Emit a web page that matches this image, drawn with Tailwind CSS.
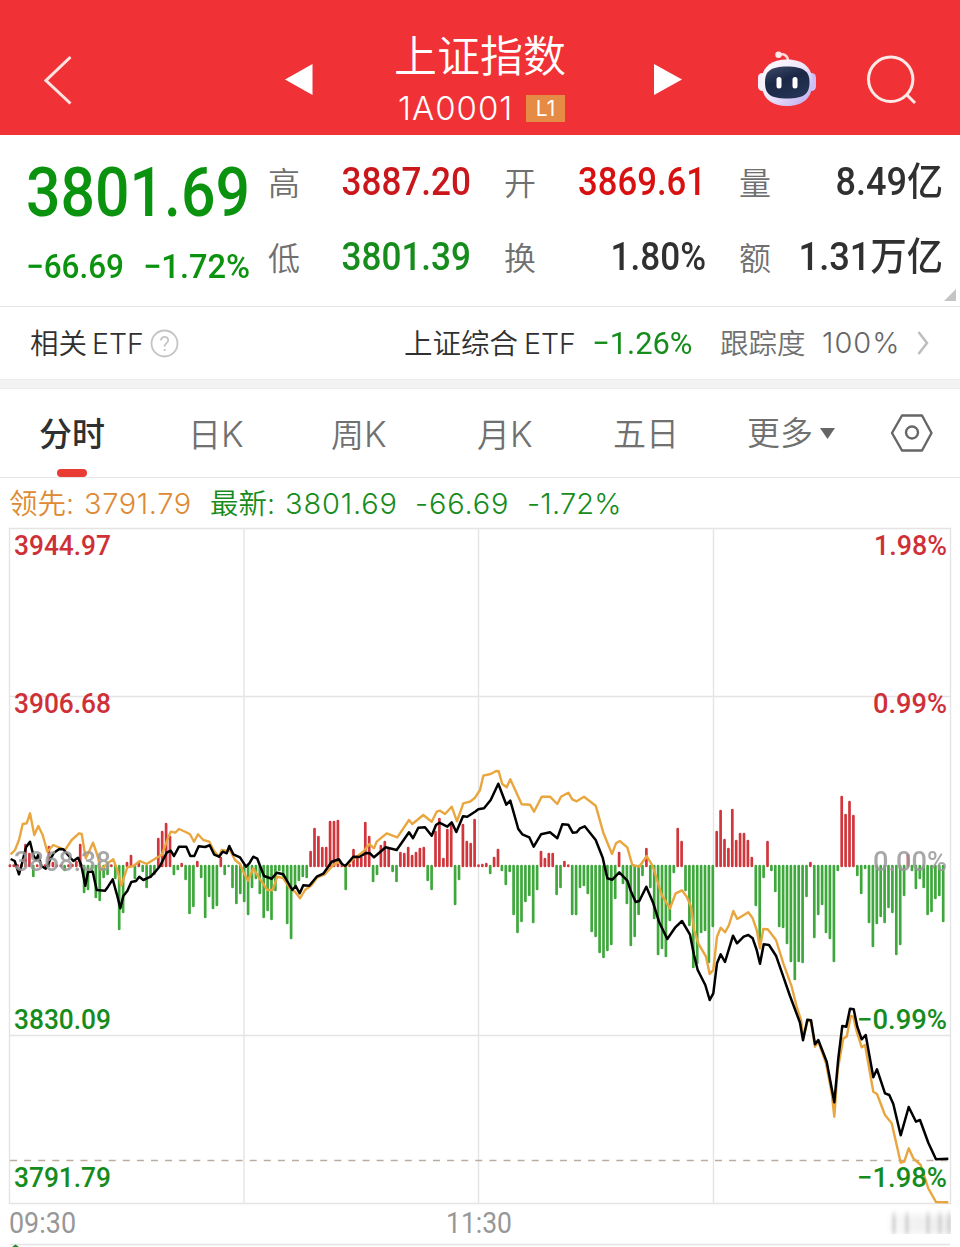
<!DOCTYPE html>
<html lang="zh-CN">
<head>
<meta charset="utf-8">
<title>上证指数</title>
<script src="https://cdn.jsdelivr.net/npm/@tailwindcss/browser@4"></script>
</head>
<body class="w-[960px] h-[1247px] overflow-hidden bg-white font-['Inter','Noto_Sans_CJK_SC',sans-serif] text-[#303030]">
<header class="flex h-[135px] bg-[#f03237] text-white">
  <div class="w-[285px] pl-[44px] pt-[54px]">
    <svg class="block" width="29" height="52" viewBox="0 0 29 52" fill="none" stroke="#ffe4e2" stroke-width="3"><path d="M26.500 3 2 26.500 26.500 49.500"/></svg>
  </div>
  <svg class="mt-[64px]" width="28" height="32" viewBox="0 0 28 32" fill="#fff"><path d="M0 15.500 27.500 0V31Z"/></svg>
  <div class="flex w-[341px] flex-col pt-[29px] pl-[81px]">
    <h1 class="h-[53px] text-[43px] leading-[54px] font-[350] whitespace-nowrap">上证指数</h1>
    <div class="flex h-[53px] w-[171px] items-center justify-between pl-[4px]">
      <span class="text-[33px] leading-[53px] font-light tracking-[1px]">1A0001</span>
      <span class="flex h-[27px] w-[39px] items-center justify-center bg-[#e58b45] text-[21px]">L1</span>
    </div>
  </div>
  <svg class="mt-[64px]" width="28" height="32" viewBox="0 0 28 32" fill="#fff"><path d="M28 15.500 0 0V31Z"/></svg>
  <svg class="mt-[50px] ml-[75px]" width="60" height="58" viewBox="757 50 60 58">
    <defs>
      <linearGradient id="shell" x1="0" y1="0" x2="1" y2="1"><stop offset="0" stop-color="#fff"/><stop offset=".5" stop-color="#eee6fa"/><stop offset="1" stop-color="#b9a4ef"/></linearGradient>
      <linearGradient id="visor" x1="0" y1="0" x2=".5" y2="1"><stop offset="0" stop-color="#3e4b69"/><stop offset=".5" stop-color="#1b2845"/><stop offset="1" stop-color="#243354"/></linearGradient>
    </defs>
    <path d="M779 55C784 53 788 56 788 61" fill="none" stroke="#ffd9dc" stroke-width="2.500"/>
    <circle cx="778.500" cy="54.800" r="3.200" fill="#ffe9ea"/>
    <rect x="758" y="73" width="9" height="18" rx="4.500" fill="#f5eefb"/>
    <rect x="807" y="73" width="9" height="18" rx="4.500" fill="#cdbef5"/>
    <path d="M787 59.500C805 59.500 812.500 69 812.500 82 812.500 97 804 106 787 106 770 106 761.500 97 761.500 82 761.500 69 769 59.500 787 59.500Z" fill="url(#shell)"/>
    <path d="M787 66.500C803 66.500 809.500 71 809.500 82 809.500 94 804 98.500 787 98.500 770 98.500 765 94 765 82 765 71 771 66.500 787 66.500Z" fill="url(#visor)"/>
    <rect x="776.500" y="77" width="5" height="11.500" rx="2.500" fill="#fff"/>
    <rect x="792.500" y="77" width="5" height="11.500" rx="2.500" fill="#fff"/>
  </svg>
  <svg class="mt-[54px] ml-[49px]" width="52" height="52" viewBox="866 54 52 52" fill="none" stroke="#ffe9e7" stroke-width="3"><circle cx="890.700" cy="79.300" r="22.200"/><path d="M906.500 94.500 915 103"/></svg>
</header>

<section class="relative flex h-[172px] border-b border-[#e6e6e6] font-['Roboto','Noto_Sans_CJK_SC',sans-serif] font-medium">
  <div class="w-[268px] pl-[26px] text-[#0b930f]">
    <div class="mt-[18px] h-[80px] origin-left scale-x-[.88] text-[69px] leading-[80px] whitespace-nowrap">3801.69</div>
    <div class="mt-[11px] flex h-[44px] w-[225px] justify-between text-[34px] leading-[44px] whitespace-nowrap">
      <span class="w-[98px] origin-left scale-x-[.925]">−66.69</span><span class="w-[108px] origin-left scale-x-[.96]">−1.72%</span>
    </div>
  </div>
  <dl class="grid h-[150px] grid-cols-[33px_170px_33px_33px_169px_33px_33px_171px] grid-rows-[75px_75px] pt-[10px] text-[39px] leading-[75px] whitespace-nowrap">
    <dt class="pt-[2px] text-[32px] font-[350] text-[#707070]">高</dt>
    <dd class="origin-right scale-x-[.9] text-right text-[#c9171b]">3887.20</dd>
    <dt class="col-start-4 pt-[2px] text-[32px] font-[350] text-[#707070]">开</dt>
    <dd class="origin-right scale-x-[.89] text-right text-[#d8100f]">3869.61</dd>
    <dt class="col-start-7 pt-[2px] text-[32px] font-[350] text-[#707070]">量</dt>
    <dd class="origin-right scale-x-[.925] text-right">8.49亿</dd>
    <dt class="pt-[2px] text-[32px] font-[350] text-[#707070]">低</dt>
    <dd class="origin-right scale-x-[.9] text-right text-[#168c1c]">3801.39</dd>
    <dt class="col-start-4 pt-[2px] text-[32px] font-[350] text-[#707070]">换</dt>
    <dd class="origin-right scale-x-[.9] text-right">1.80%</dd>
    <dt class="col-start-7 pt-[2px] text-[32px] font-[350] text-[#707070]">额</dt>
    <dd class="origin-right scale-x-[.93] text-right">1.31万亿</dd>
  </dl>
  <svg class="absolute top-[154px] left-[944px]" width="12" height="12" viewBox="0 0 12 12" fill="#c4c4c4"><path d="M12 0V12H0Z"/></svg>
</section>

<section class="flex h-[72px] items-center pl-[30px] text-[28.500px] whitespace-nowrap">
  <span class="w-[120px] pt-[2px] font-[350] [word-spacing:-3px]">相关 ETF</span>
  <svg width="29" height="29" viewBox="0 0 29 29" fill="none" stroke="#c4c4c4" stroke-width="1.800"><circle cx="14.500" cy="14.500" r="13"/><path d="M11 11.500C11 6.500 18.300 6.800 18.200 11.300 18.200 14 14.600 14.200 14.600 17.500M14.600 20V22"/></svg>
  <span class="ml-[225px] w-[188px] pt-[2px] font-[350] [word-spacing:-2px]">上证综合 ETF</span>
  <span class="w-[128px] origin-left scale-x-[.965] font-['Roboto',sans-serif] text-[32px] text-[#168c1c]">−1.26%</span>
  <span class="w-[102px] pt-[2px] font-[350] text-[#707070]">跟踪度</span>
  <span class="w-[95px] text-[29px] font-light tracking-[1px] text-[#666]">100%</span>
  <svg width="12" height="26" viewBox="0 0 12 26" fill="none" stroke="#bdbdbd" stroke-width="2.500"><path d="M1.500 2 10 13 1.500 24"/></svg>
</section>
<div class="h-[10px] border-y border-[#ececec] bg-[#f3f3f3]"></div>

<nav class="flex h-[89px] border-b border-[#e6e6e6] text-[33px] leading-[90px] font-[350] whitespace-nowrap text-[#707070]">
  <div class="relative w-[188px] pl-[39px] font-medium text-[#303030]">分时<i class="absolute bottom-0 left-[57px] h-[8px] w-[30px] rounded-full bg-[#e93c34]"></i></div>
  <div class="w-[143px]">日<span class="text-[35px]">K</span></div>
  <div class="w-[146px]">周<span class="text-[35px]">K</span></div>
  <div class="w-[136px]">月<span class="text-[35px]">K</span></div>
  <div class="w-[134px]">五日</div>
  <div class="flex w-[143px] items-center gap-[7px]">更多<svg width="15" height="11" viewBox="0 0 15 11" fill="#666"><path d="M0 0H15L7.500 11Z"/></svg></div>
  <svg class="mt-[24px]" width="44" height="40" viewBox="0 0 44 40" fill="none" stroke="#666" stroke-width="2.400" stroke-linejoin="round"><path d="M12 2.500H32L41.500 20 32 37.500H12L2 20Z"/><circle cx="22" cy="19.500" r="6"/></svg>
</nav>

<div class="flex h-[49px] items-center pt-[3px] pl-[9px] text-[28.500px] font-[350] whitespace-nowrap text-[#168c1c]">
  <span class="w-[201px] text-[#dd8a32]">领先: <span class="ml-[2px] text-[29px] tracking-[0.600px]">3791.79</span></span>
  <span class="w-[205px]">最新: <span class="ml-[2px] text-[29px] tracking-[0.800px]">3801.69</span></span>
  <span class="w-[112px] text-[29px] tracking-[0.800px]">-66.69</span>
  <span class="text-[29px] tracking-[0.200px]">-1.72%</span>
</div>

<svg class="block" width="960" height="720" viewBox="0 527 960 720" fill="none">
  <g stroke="#e4e4e4" stroke-width="1.400">
    <path d="M9.500 528.500H950.500V1203.500H9.500Z" />
    <path d="M244 528V1203M478.500 528V1203M713.500 528V1203M10 696.500H950M10 1035.500H950M10 1244.500H950"/>
  </g>
  <path d="M10 1160.500H950" stroke="#b8ada0" stroke-width="1.300" stroke-dasharray="7 7.100"/>
  <g id="bars" stroke-width="2.700" stroke-linecap="round"></g>
  <polyline stroke="#e9a63f" stroke-width="2.400" stroke-linejoin="round" points="10.7,854.3 15,850 19,840 22.7,824 26.7,823.3 30,813.3 34.3,835 38.3,826 42.7,835 47.3,851.7 53.3,845 65,850 71.7,840 79,833.3 81.7,834 85.7,858.3 88.3,853.3 93,842.7 97.3,855 101,870 106.7,864 113.3,859.3 117.3,870 121.3,885.7 127.3,867.3 133.3,866 140,861 146.7,864 156.7,857.7 161.7,855 168.3,837.3 170.7,831.7 175.3,832.7 179,829 185.7,832 190,834.3 194,841.7 198,834.3 203.3,840 209.3,841.7 214,850.7 219,856.7 221.7,850 226.7,850.7 230,850 235,860 240,864 243.3,871.7 248,880.7 253.3,868.3 258.3,876.7 267.3,890 272.7,890 277.3,876.7 283.3,878.3 290,888.3 295,891.7 300,898.3 305,890 311.7,885 317.3,877.3 325,874.3 333.3,865 339,861.7 345.3,866.7 353.3,859 363.3,851.7 369.3,844 374,848.3 376.7,841.7 386.7,833.3 397.3,837.3 409,820 412.3,824 423.3,815 431.7,821.7 436.7,811.7 440,810.7 445,814 451.7,806.7 457,821.3 463.3,803.3 470,801.7 475,797.7 480,790 483.3,775.7 490.7,774 496,771 498.7,771.3 502.3,784 506.7,787.3 510.3,779.3 521.7,804.3 530,804.7 534,811.7 541.7,796.7 550,796.7 557.3,804 561,796.7 568.3,792.7 572.3,799.3 576.7,801.3 584,796.7 595.7,805.7 603.3,832.7 612,854 616,843.3 619.7,841 627.3,847.3 632.3,865 639.3,866.7 646.7,856 652.7,866 661.7,895 670,908.3 675.7,893.3 682,890.3 686.7,896.7 691,906.7 694,930 698.3,943.3 706,956.7 709.7,974 713.3,970 717,936.7 720.7,927.7 725,932.3 729,925 733.3,911 737.3,919 748.3,912.3 752.7,918.3 756.7,930 760,948.3 763.3,929 767.7,929.3 776,940 783.3,963.3 791.7,986.7 796.7,1006.7 801,1020 803.3,1038 807.7,1020.7 811,1021.7 815,1046.7 818.3,1041.7 826,1063.3 831.7,1093.3 834.3,1116.7 837.7,1070 843.3,1038.3 846.7,1036.7 850.7,1016 853.3,1016.7 856.7,1031.7 861.7,1047.3 865,1045 873.3,1091.7 877,1094 885,1115 891.7,1123.3 900.7,1162.7 904.3,1161.7 908.7,1148.3 913.3,1158.3 920.7,1165 928.3,1188.3 936,1202 948.3,1202.3"/>
  <polyline stroke="#000" stroke-width="2.500" stroke-linejoin="round" points="10.7,859 14.7,861 19,874.3 22,863.3 26,847.3 30,841.7 33.3,855 36,860 38.3,854.7 41.3,866 45.7,868.7 50,860 54,852.7 59.3,849 63.3,849.3 68,855 73.3,861 78,857.7 81.3,865 85.3,885.7 88,871.7 92.7,871.7 96.7,890 105,890.7 108,886.7 112.7,879.3 117.3,896 120.3,908.3 123.3,896 127.3,891 131.3,882 136,881 139.3,876.7 143.3,880 150.7,876.7 155.3,871.7 160,866 166.7,852.7 170.7,850.7 174,856 179,846.7 186.3,846.7 190.3,856 194.3,856 198.7,846.3 205,847 209.7,845.3 214.3,854.7 219,856.7 222.7,851.7 226.7,853.3 229.3,846 233.3,854.3 240,857.3 246,866.7 249.3,863.3 253.3,856.7 257.3,858.7 264,876 271.7,878.7 276.7,872.7 283.3,874.3 292.3,890 295.7,886 299.7,893.3 303.3,885.3 309.3,885.7 316.7,876.7 323.3,873.7 331.7,861.7 339,859.3 342,864 345.3,866 353.3,856.7 359.3,857 366,853 370,853.3 374,857.3 385.7,847.3 396.7,850 409,832.3 413,838.3 418.3,827.7 425,827.3 431.7,835.7 436,825 439.3,822.7 447.3,826.7 451.7,822.3 456.3,832 463,816.3 467.3,816.7 475,811.7 478.3,809.3 484,808.3 490.7,800 498.3,783.7 506.3,804.7 510.3,800.7 518.3,829 522.3,834.3 529.3,837.3 533.7,846.7 541,834.3 550,832.3 557.3,838.3 562.3,824.3 568.3,824.7 572.7,832.7 576.7,832.3 580,828.3 584.7,826.3 595.7,840 602.7,857.7 607.3,878.3 612.3,879.7 619.3,872.3 627.3,880.7 630.7,890.7 635.7,902 639.3,901 646.3,886.7 653.3,903.3 659,921.7 667.3,939 675,927.7 682,921 690,934.7 694,955 697.7,970 705.3,985 709.7,1000 713.3,993.3 717,963.3 720.7,954.3 725,962 733,935.7 737,943.3 743.7,936.7 748.3,935 752.7,938.3 756.7,950 760,963.7 763.7,944.3 769,945 776,955.7 783.3,976.7 790,996 800,1022.7 803,1040.3 807.3,1019.7 811,1020.3 815,1044.3 818.3,1040 826.7,1061.7 834.3,1102.3 838.3,1058.3 842.3,1026 846.3,1026.7 850,1008.7 853.7,1009.3 857.3,1026.7 861.7,1039.3 865.7,1035 873.3,1077.3 877,1069.3 885,1093.3 889.3,1095 893.3,1104 900.7,1135.3 908.7,1107 916,1121.7 920,1120 928.3,1142.7 936,1159.3 948.3,1158.7"/>
  <g font-family="Roboto, sans-serif" font-weight="500" font-size="28">
    <g fill="#999" opacity=".85">
      <text x="14" y="870.500" textLength="97" lengthAdjust="spacingAndGlyphs">3868.38</text>
      <text x="873" y="870.500" textLength="74" lengthAdjust="spacingAndGlyphs">0.00%</text>
    </g>
    <g fill="#cf3037">
      <text x="14" y="555" textLength="97" lengthAdjust="spacingAndGlyphs">3944.97</text>
      <text x="874" y="555" textLength="73" lengthAdjust="spacingAndGlyphs">1.98%</text>
      <text x="14" y="713" textLength="97" lengthAdjust="spacingAndGlyphs">3906.68</text>
      <text x="873" y="713" textLength="74" lengthAdjust="spacingAndGlyphs">0.99%</text>
    </g>
    <g fill="#168c1c">
      <text x="14" y="1028.500" textLength="97" lengthAdjust="spacingAndGlyphs">3830.09</text>
      <text x="857" y="1028.500" textLength="90" lengthAdjust="spacingAndGlyphs">−0.99%</text>
      <text x="14" y="1186.500" textLength="97" lengthAdjust="spacingAndGlyphs">3791.79</text>
      <text x="857" y="1186.500" textLength="90" lengthAdjust="spacingAndGlyphs">−1.98%</text>
    </g>
    <g fill="#979797" font-weight="400" font-size="29">
      <text x="9" y="1233" textLength="67" lengthAdjust="spacingAndGlyphs">09:30</text>
      <text x="446" y="1233" textLength="66" lengthAdjust="spacingAndGlyphs">11:30</text>
    </g>
  </g>
  <defs>
    <linearGradient id="fade"><stop offset="0" stop-color="#ededed" stop-opacity="0"/><stop offset=".3" stop-color="#ededed" stop-opacity=".8"/><stop offset="1" stop-color="#e6e6e6"/></linearGradient>
    <filter id="soft" filterUnits="userSpaceOnUse" x="870" y="1200" width="90" height="47"><feGaussianBlur stdDeviation="1.800 3"/></filter>
    <clipPath id="smudgeBox"><rect x="884" y="1206" width="67" height="28"/></clipPath>
  </defs>
  <g clip-path="url(#smudgeBox)">
    <rect x="884" y="1215" width="75" height="19" fill="url(#fade)" opacity=".8" filter="url(#soft)"/>
    <path d="M894 1214V1234M907 1214V1234M928 1214V1234M940 1214V1234M949 1214V1234" stroke="#d6d6d6" stroke-width="4" filter="url(#soft)"/>
  </g>
  <path d="M12 1247 15.500 1244.500 19 1247Z" fill="#168c1c"/>
</svg>
<script>
  // One value per trading minute: positive bars rise above the zero line, negative ones hang below it.
  const bars = [0,1,0,1,22,13,-11,1,2,1,20,4,0,0,-5,1,2,5,22,-27,-24,-5,-32,-35,-12,-9,1,-13,-64,-47,4,11,-13,5,-6,-22,-12,-9,28,35,43,30,-9,-4,3,-14,-48,-41,5,-12,-52,-31,-43,-40,9,-9,-1,-22,-38,-28,
    -36,-49,-22,-13,-28,-52,-45,-54,-25,-5,-12,-58,-73,-20,-15,-11,-12,15,38,30,19,19,45,45,46,1,-24,2,17,8,9,44,30,-16,-9,21,25,18,-6,-16,14,13,19,11,14,18,19,-15,-24,35,48,8,37,43,-39,-14,42,25,23,47,
    1,2,3,-8,9,17,-5,-19,-6,-49,-67,-56,-36,-30,-57,-24,15,8,13,13,-29,-22,5,1,-49,-49,-22,-20,-28,-66,-71,-87,-92,-85,-79,-33,14,-18,-38,-80,-71,-49,-10,18,-22,-53,-89,-83,-91,-55,-7,38,25,-25,-60,-102,-98,-67,-65,-97,
    -61,35,56,27,18,57,26,33,33,26,9,-40,-78,-12,25,-5,-26,-61,-62,-78,-96,-114,-96,-97,-31,4,-72,-49,-39,-67,-73,-96,-5,70,52,65,51,-10,-28,-3,-57,-81,-58,-51,-57,-42,-47,-89,-79,-30,12,-5,-23,-13,-22,-49,-46,-33,-30,-56];
  const path = { up: '', down: '' };
  bars.forEach((v, i) => {
    const x = (9.9 + i * 3.905).toFixed(1);
    if (v >= 0) path.up += `M${x} 866V${Math.min(865.5, 866 - v + 1)}`;
    else path.down += `M${x} 866V${866 - v - 1}`;
  });
  document.getElementById('bars').innerHTML =
    `<path stroke="#d0363b" d="${path.up}"/><path stroke="#3fa83c" d="${path.down}"/>`;
</script>
</body>
</html>
